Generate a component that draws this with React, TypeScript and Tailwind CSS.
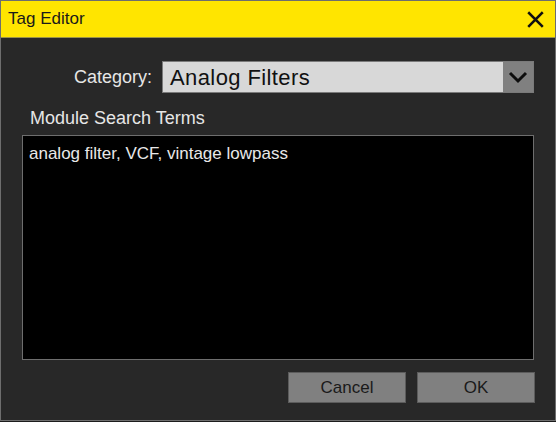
import { useState } from "react";

export default function App() {
  const [category] = useState("Analog Filters");
  const [terms, setTerms] = useState("analog filter, VCF, vintage lowpass");

  return (
    <div className="h-[422px] w-[556px] overflow-hidden bg-[#1c1c1c] font-['Liberation_Sans',Arial,sans-serif]">
      <div className="flex h-[421px] w-[556px] flex-col border border-[#6e6e6e] bg-[#282828]">
        {/* title bar */}
        <div className="flex h-[37px] shrink-0 items-center justify-between border-b border-[#9c9448] bg-[#ffe500] pl-[7px] pr-[10px]">
          <span className="text-[17px] text-[#1a1a1a]">Tag Editor</span>
          <svg width="17" height="17" viewBox="0 0 16 16" className="mr-[1px]">
            <path d="M2 2 L14 14 M14 2 L2 14" stroke="#111" strokeWidth="2.4" strokeLinecap="square" />
          </svg>
        </div>

        <div className="flex flex-1 flex-col px-[21px]">
          {/* category */}
          <div className="mt-[23px] flex h-[32px] items-center">
            <span className="w-[140px] pr-[10px] text-right text-[18px] text-[#e6e6e6]">Category:</span>
            <div className="flex h-[32px] flex-1 border border-[#7a7a7a]">
              <div className="flex flex-1 items-center bg-[#d8d8d8] pl-[7px] text-[22px] tracking-[0.4px] text-[#111]">
                {category}
              </div>
              <div className="flex w-[30px] items-center justify-center bg-[#808080]">
                <svg width="20" height="14" viewBox="0 0 20 14">
                  <path d="M2 3 L10 11 L18 3" fill="none" stroke="#0d0d0d" strokeWidth="3" />
                </svg>
              </div>
            </div>
          </div>

          {/* search terms */}
          <div className="mt-[15px] h-[20px] pl-[8px] text-[18px] leading-[20px] text-[#e6e6e6]">Module Search Terms</div>
          <textarea
            value={terms}
            onChange={(e) => setTerms(e.target.value)}
            className="mt-[7px] h-[225px] w-full resize-none border border-[#6e6e6e] bg-black px-[6px] pt-[8px] text-[17px] leading-[20px] text-[#e8e8e8] outline-none"
          />

          {/* buttons */}
          <div className="-mr-[1px] mt-[12px] flex justify-end gap-[11px]">
            <button className="h-[31px] w-[118px] border border-[#5c5c5c] bg-[#808080] text-[17px] text-[#1a1a1a]">
              Cancel
            </button>
            <button className="h-[31px] w-[118px] border border-[#5c5c5c] bg-[#808080] text-[17px] text-[#1a1a1a]">
              OK
            </button>
          </div>
        </div>
      </div>
    </div>
  );
}
